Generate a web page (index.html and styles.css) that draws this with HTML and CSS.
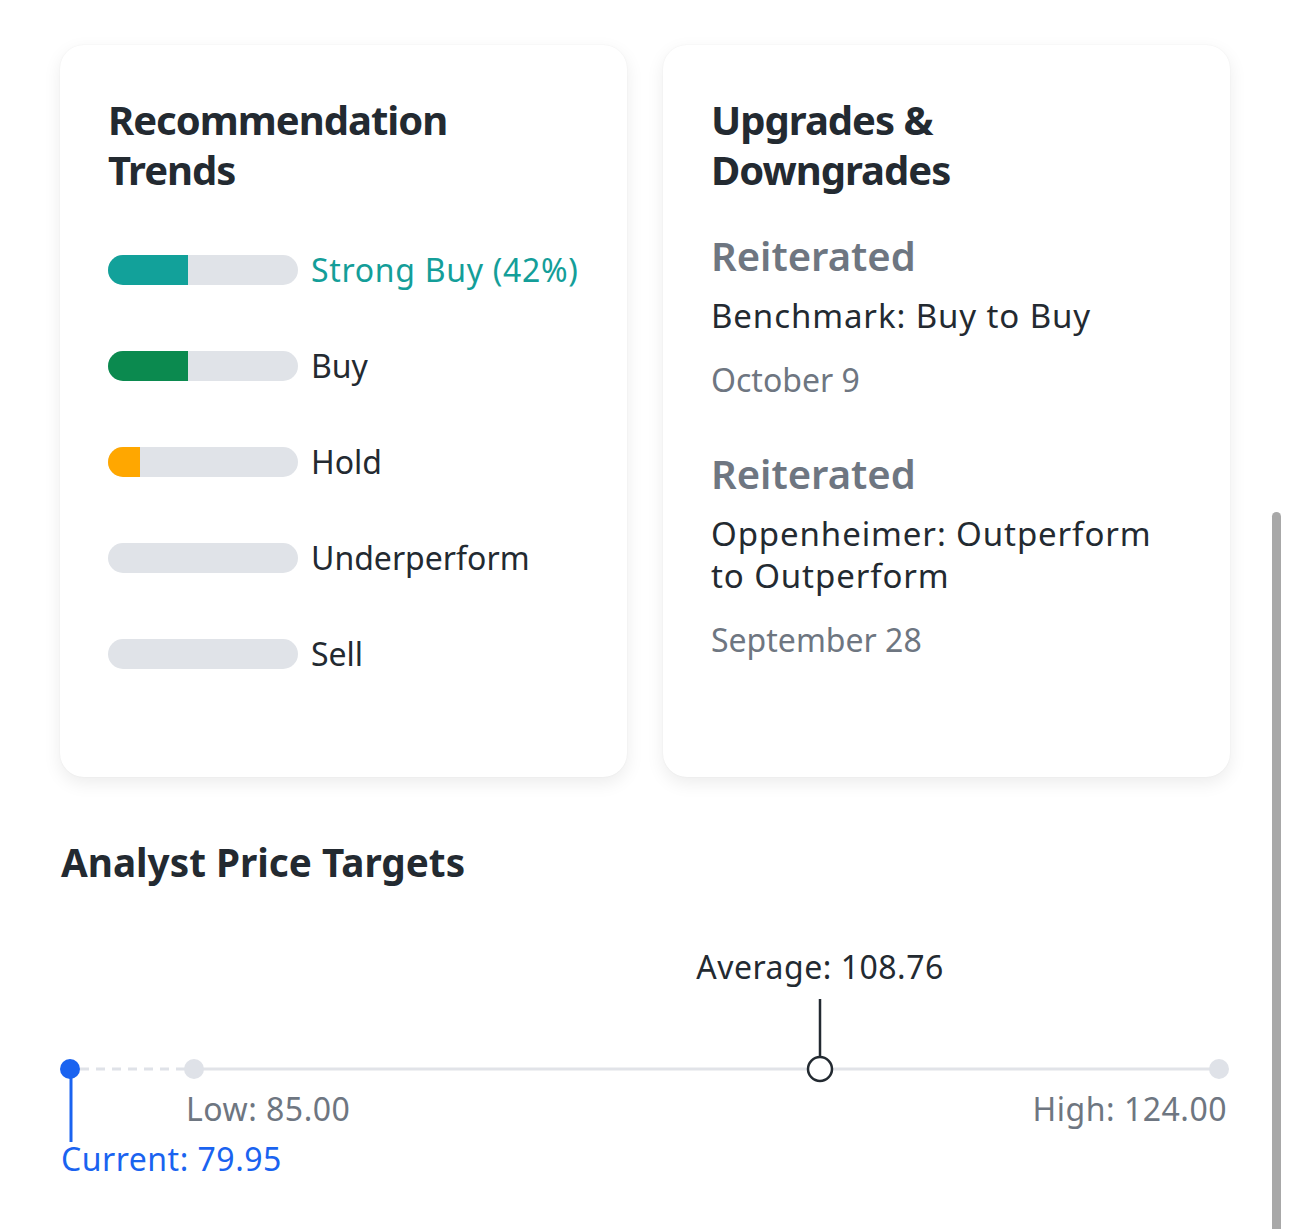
FILE: index.html
```html
<!DOCTYPE html>
<html>
<head>
<meta charset="utf-8">
<link rel="stylesheet" href="styles.css">
</head>
<body>
<div class="page">
  <div class="cards">
    <section class="card">
      <h2 class="card-title">Recommendation<br>Trends</h2>
      <div class="trends">
        <div class="trend">
          <div class="bar"><div class="fill fill-strong" style="width:42%"></div></div>
          <span class="trend-label label-strong">Strong Buy (42%)</span>
        </div>
        <div class="trend">
          <div class="bar"><div class="fill fill-buy" style="width:42%"></div></div>
          <span class="trend-label">Buy</span>
        </div>
        <div class="trend">
          <div class="bar"><div class="fill fill-hold" style="width:17%"></div></div>
          <span class="trend-label">Hold</span>
        </div>
        <div class="trend">
          <div class="bar"></div>
          <span class="trend-label">Underperform</span>
        </div>
        <div class="trend">
          <div class="bar"></div>
          <span class="trend-label">Sell</span>
        </div>
      </div>
    </section>
    <section class="card">
      <h2 class="card-title">Upgrades &amp;<br>Downgrades</h2>
      <div class="event first">
        <div class="event-action">Reiterated</div>
        <div class="event-text">Benchmark: Buy to Buy</div>
        <div class="event-date">October 9</div>
      </div>
      <div class="event">
        <div class="event-action">Reiterated</div>
        <div class="event-text">Oppenheimer: Outperform<br>to Outperform</div>
        <div class="event-date">September 28</div>
      </div>
    </section>
  </div>
  <h2 class="section-title">Analyst Price Targets</h2>
  <div class="chart">
    <svg class="chart-svg" width="1190" height="200" viewBox="0 0 1190 200">
      <line x1="20" y1="134" x2="134" y2="134" stroke="#dfe2e8" stroke-width="3" stroke-dasharray="9 7"/>
      <line x1="134" y1="134" x2="1159" y2="134" stroke="#e1e3e8" stroke-width="3"/>
      <circle cx="134" cy="134" r="10" fill="#dfe2e8"/>
      <circle cx="1159" cy="134" r="10" fill="#dfe2e8"/>
      <line x1="760" y1="64" x2="760" y2="122" stroke="#232a31" stroke-width="2.5"/>
      <circle cx="760" cy="134" r="12" fill="#fff" stroke="#232a31" stroke-width="2.5"/>
      <line x1="11" y1="134" x2="11" y2="207" stroke="#1a63f0" stroke-width="3"/>
      <circle cx="10" cy="134" r="10" fill="#1a63f0"/>
    </svg>
    <span class="pt pt-avg">Average: 108.76</span>
    <span class="pt pt-low">Low: 85.00</span>
    <span class="pt pt-high">High: 124.00</span>
    <span class="pt pt-cur">Current: 79.95</span>
  </div>
</div>
<div class="scrollbar"></div>
</body>
</html>
```
FILE: styles.css
```css
html, body {
  margin: 0;
  padding: 0;
  background: #fff;
}
body {
  font-family: "Noto Sans", "Open Sans", sans-serif;
  color: #232a31;
  width: 1290px;
  height: 1229px;
  overflow: hidden;
  position: relative;
}
.page {
  padding: 45px 0 0 60px;
  width: 1170px;
}
.cards {
  display: flex;
  gap: 36px;
  align-items: stretch;
}
.card {
  width: 567px;
  box-sizing: border-box;
  background: #fff;
  border-radius: 24px;
  box-shadow: 0 6px 18px rgba(0, 0, 0, 0.08), 0 0 2px rgba(0, 0, 0, 0.05);
  padding: 50px 48px 103px 48px;
}
.card-title {
  margin: 0;
  font-size: 40px;
  line-height: 50px;
  font-weight: 700;
  letter-spacing: -1px;
  color: #232a31;
}
.trends {
  margin-top: 55px;
  display: flex;
  flex-direction: column;
  gap: 56px;
}
.trend {
  display: flex;
  align-items: center;
  height: 40px;
  gap: 13px;
}
.bar {
  width: 190px;
  height: 30px;
  border-radius: 15px;
  background: #e0e3e8;
  overflow: hidden;
  flex: none;
}
.fill {
  height: 100%;
}
.fill-strong { background: #12a19a; }
.fill-buy { background: #0b8a4f; }
.fill-hold { background: #ffa700; }
.trend-label {
  font-size: 32px;
  line-height: 40px;
  color: #232a31;
}
.label-strong {
  color: #149e99;
  letter-spacing: 0.7px;
}
.event-action {
  font-size: 40px;
  line-height: 48px;
  font-weight: 600;
  color: #6e7681;
}
.event.first { margin-top: 37px; }
.event { margin-top: 50px; }
.event-text {
  margin-top: 15px;
  font-size: 33px;
  line-height: 42px;
  letter-spacing: 0.9px;
  color: #232a31;
}
.event-date {
  margin-top: 23px;
  font-size: 32px;
  line-height: 40px;
  color: #6e7681;
}
.section-title {
  margin: 60px 0 0 1px;
  font-size: 38.7px;
  line-height: 50px;
  font-weight: 700;
  color: #232a31;
}
.chart {
  position: relative;
  margin-top: 48px;
  height: 240px;
}
.chart-svg {
  position: absolute;
  left: 0;
  top: 0;
  overflow: visible;
}
.pt {
  position: absolute;
  font-size: 32px;
  line-height: 40px;
  letter-spacing: 0.5px;
  white-space: nowrap;
}
.pt-avg {
  left: 760px;
  top: 12px;
  transform: translateX(-50%);
  color: #232a31;
}
.pt-low {
  left: 126px;
  top: 154px;
  color: #6e7681;
}
.pt-high {
  right: 3px;
  top: 154px;
  color: #6e7681;
}
.pt-cur {
  left: 1px;
  top: 204px;
  color: #1a63f0;
}
.scrollbar {
  position: absolute;
  left: 1272px;
  top: 512px;
  width: 9px;
  height: 730px;
  border-radius: 5px;
  background: #a8a8a8;
}
```
